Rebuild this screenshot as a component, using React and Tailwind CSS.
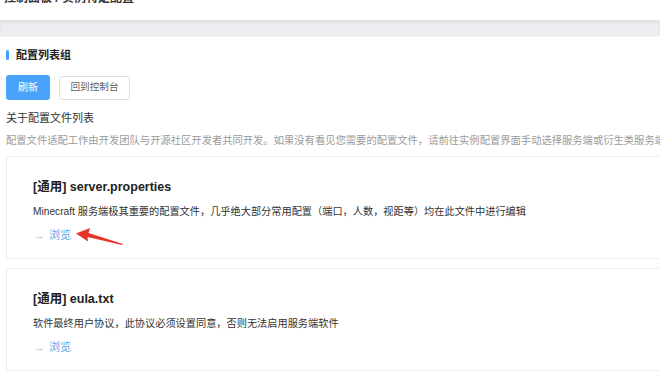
export default function App() {
  const cjk = { fontFamily: '"Liberation Sans", "Noto Sans CJK SC", sans-serif' };
  const Card = ({ title, desc }) => (
    <div className="h-[103px] border border-[#ebeef2] rounded-[2px] bg-white pl-[26px] pt-[21px] flex flex-col">
      <div className="h-[18px] flex items-center text-[12.5px] font-bold text-[#222]">{title}</div>
      <div className="h-[18px] mt-[7px] flex items-center text-[10.2px] text-[#333] whitespace-nowrap">{desc}</div>
      <div className="h-[16px] mt-[6px] flex items-center text-[11px] text-[#5aa6e8]">
        <span className="ml-[1px] mr-[4px] text-[11px] text-[#8cc0ee]">→</span>
        <span>浏览</span>
      </div>
    </div>
  );
  return (
    <div className="w-[660px] h-[379px] overflow-hidden bg-white relative" style={cjk}>
      <div className="h-[20px] bg-white overflow-hidden">
        <div className="mt-[-8px] ml-[4px] leading-[13px] text-[12px] font-bold text-[#333] whitespace-nowrap">控制面板 / 实例特定配置</div>
      </div>
      <div className="h-[17px] bg-[#eceef2] border-t border-[#dfe1e5] shadow-[inset_0_2px_3px_rgba(0,0,0,0.06)] border-b border-b-[#f4f5f7]"></div>
      <div className="pl-[6px]">
        <div className="h-[14px] mt-[11px] flex items-center">
          <div className="w-[3px] h-[10px] rounded-[2px] bg-[#409eff]"></div>
          <div className="ml-[7px] text-[11px] font-bold text-[#222] leading-[14px]">配置列表组</div>
        </div>
        <div className="mt-[13px] flex items-center gap-[9px]">
          <div className="w-[44px] h-[25px] rounded-[3px] bg-[#4aa3fb] flex items-center justify-center text-[10px] text-white">刷新</div>
          <div className="w-[71px] h-[24px] rounded-[3px] border border-[#dcdfe6] bg-white flex items-center justify-center text-[9.6px] text-[#606266]">回到控制台</div>
        </div>
        <div className="h-[14px] mt-[11px] flex items-center text-[11px] text-[#333]">关于配置文件列表</div>
        <div className="h-[14px] mt-[9px] flex items-center text-[10.3px] text-[#9a9a9a] whitespace-nowrap">配置文件适配工作由开发团队与开源社区开发者共同开发。如果没有看见您需要的配置文件，请前往实例配置界面手动选择服务端或衍生类服务端配置文件。</div>
        <div className="mt-[8px] flex flex-col gap-[9px] w-[700px]">
          <Card title="[通用] server.properties" desc="Minecraft 服务端极其重要的配置文件，几乎绝大部分常用配置（端口，人数，视距等）均在此文件中进行编辑" />
          <Card title="[通用] eula.txt" desc="软件最终用户协议，此协议必须设置同意，否则无法启用服务端软件" />
        </div>
      </div>
      <svg className="absolute left-0 top-0 pointer-events-none" width="660" height="379" viewBox="0 0 660 379">
        <polygon points="76,233.5 90,228 88.5,233 123,244 122,245 87.5,237 88,241.5" fill="#e8332a" />
      </svg>
    </div>
  );
}
